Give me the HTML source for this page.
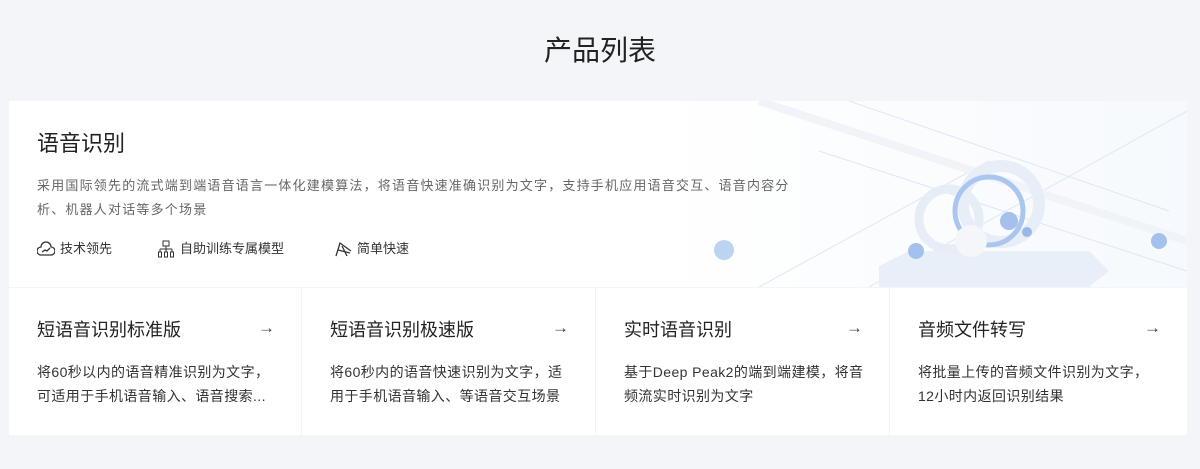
<!DOCTYPE html>
<html><head><meta charset="utf-8"><style>
*{margin:0;padding:0;box-sizing:border-box}
body{width:1200px;height:469px;background:#f3f5f9;font-family:"Liberation Sans","Noto Sans CJK SC",sans-serif;color:#333;position:relative;overflow:hidden}
h1{position:absolute;top:31px;left:0;width:1200px;text-align:center;font-size:28px;font-weight:400;color:#222;line-height:40px}
.top{position:absolute;left:9px;top:101px;width:1178px;height:186px;background:linear-gradient(90deg,#fff 0%,#fff 55%,#f6f9fd 100%);overflow:hidden}
.top h2{position:absolute;left:28px;top:28px;font-size:22px;font-weight:400;color:#222;line-height:30px}
.top p{position:absolute;left:28px;top:73px;width:760px;font-size:13px;letter-spacing:1.2px;color:#666;line-height:24px}
.feat{position:absolute;top:139px;font-size:13px;color:#333;line-height:18px;display:flex;align-items:center;gap:5px}
.cells{position:absolute;left:9px;top:288px;width:1178px;height:147px;display:flex;gap:1px;background:#f0f2f5}
.cell{background:#fff;position:relative}
.cell h3{position:absolute;left:28px;top:30px;font-size:18px;font-weight:400;color:#222;line-height:24px}
.cell .ar{position:absolute;right:26px;top:30px;font-size:17px;color:#444}
.cell p{position:absolute;left:28px;top:72px;width:242px;font-size:14px;letter-spacing:0.4px;color:#333;line-height:24px}
</style></head><body>
<h1>产品列表</h1>
<div class="top">
<svg style="position:absolute;left:600px;top:0" width="578" height="186">
<g stroke="#dde7f5" stroke-width="1" fill="none">
<line x1="210" y1="50" x2="578" y2="170"/><line x1="240" y1="0" x2="560" y2="110"/>
<line x1="260" y1="186" x2="578" y2="10"/><line x1="150" y1="186" x2="380" y2="60"/>
</g>
<g stroke="#f0f4f9" stroke-width="8"><line x1="150" y1="0" x2="578" y2="140"/></g>
<polygon points="270,165 300,150 480,150 500,170 480,186 270,186" fill="#e9eff9"/>
<circle cx="340" cy="118" r="30" fill="none" stroke="#e6edf7" stroke-width="9"/>
<circle cx="392" cy="103" r="38" fill="none" stroke="#e8eef7" stroke-width="12"/>
<circle cx="380" cy="110" r="34" fill="none" stroke="#aac6ee" stroke-width="5"/>
<circle cx="362" cy="140" r="16" fill="#f4f6fa"/>
<circle cx="400" cy="120" r="9" fill="#a3c1ec"/>
<circle cx="418" cy="131" r="5" fill="#97b8e8"/>
<circle cx="307" cy="150" r="8" fill="#a3c1ec"/>
<circle cx="115" cy="149" r="10" fill="#bcd3f2"/>
<circle cx="550" cy="140" r="8" fill="#a3c1ec"/>
</svg>
<h2>语音识别</h2>
<p>采用国际领先的流式端到端语音语言一体化建模算法，将语音快速准确识别为文字，支持手机应用语音交互、语音内容分析、机器人对话等多个场景</p>
<div class="feat" style="left:28px"><svg width="18" height="16"><path d="M4 14a4 4 0 0 1 0-8 5 5 0 0 1 10 0 4 4 0 0 1 0 8z M5 11l3-2 2 1 3-3" fill="none" stroke="#333" stroke-width="1.3"/></svg>技术领先</div>
<div class="feat" style="left:148px"><svg width="18" height="18"><rect x="6" y="1" width="6" height="5" fill="none" stroke="#333"/><path d="M9 6v3M3 9h12M3 9v3M9 9v3M15 9v3" stroke="#333" fill="none"/><rect x="1.5" y="12" width="3" height="5" fill="none" stroke="#333"/><rect x="7.5" y="12" width="3" height="5" fill="none" stroke="#333"/><rect x="13.5" y="12" width="3" height="5" fill="none" stroke="#333"/></svg>自助训练专属模型</div>
<div class="feat" style="left:325px"><svg width="18" height="16"><path d="M2 15L6 2l11 8M4 9l12 3M8 5l5 10" fill="none" stroke="#333" stroke-width="1.3"/></svg>简单快速</div>
</div>
<div class="cells">
<div class="cell" style="width:292px"><h3>短语音识别标准版</h3><span class="ar">→</span><p>将60秒以内的语音精准识别为文字，可适用于手机语音输入、语音搜索...</p></div>
<div class="cell" style="width:293px"><h3>短语音识别极速版</h3><span class="ar">→</span><p>将60秒内的语音快速识别为文字，适用于手机语音输入、等语音交互场景</p></div>
<div class="cell" style="width:293px"><h3>实时语音识别</h3><span class="ar">→</span><p>基于Deep Peak2的端到端建模，将音频流实时识别为文字</p></div>
<div class="cell" style="flex:1"><h3>音频文件转写</h3><span class="ar">→</span><p>将批量上传的音频文件识别为文字，12小时内返回识别结果</p></div>
</div>
</body></html>
